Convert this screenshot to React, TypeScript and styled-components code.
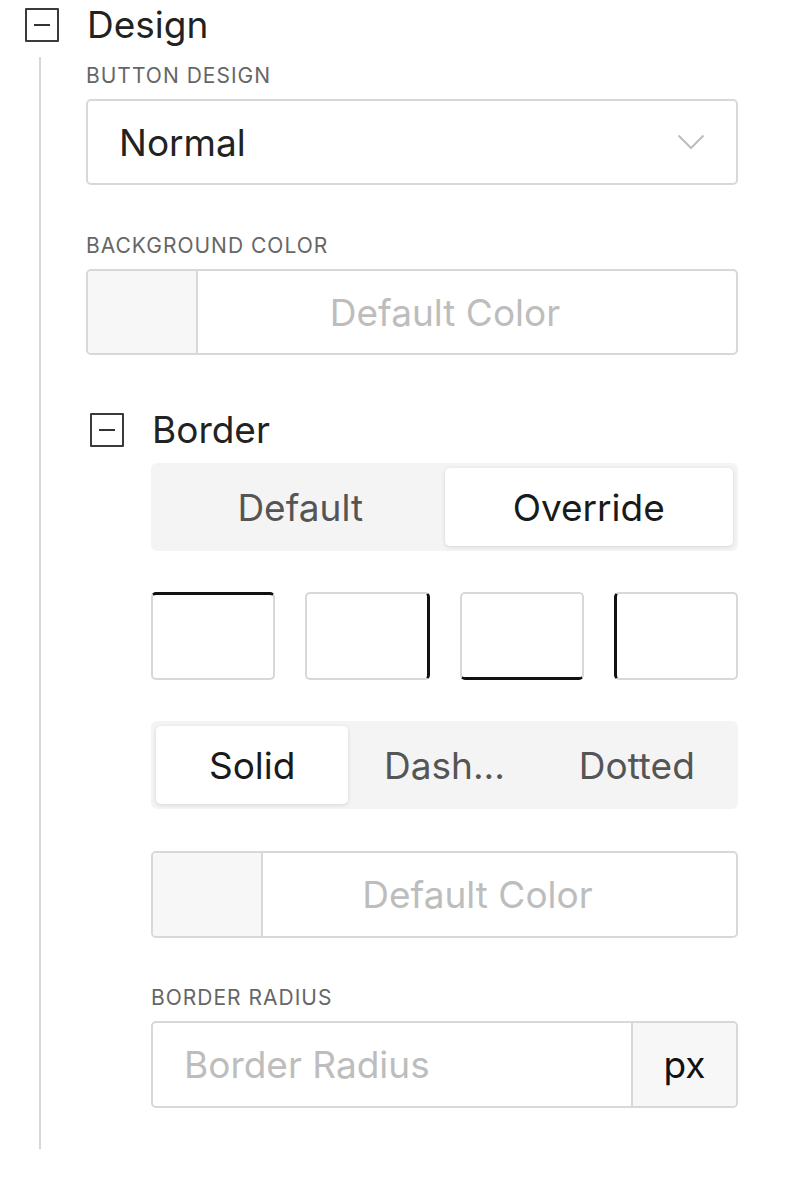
import { createGlobalStyle, styled } from "styled-components";

const GlobalStyle = createGlobalStyle`
  body {
    margin: 0;
    background: #fff;
    font-family: Inter, "Noto Sans", "Liberation Sans", sans-serif;
    color: #222;
  }
`;

const Page = styled.div`
  padding: 8px 0 0 25px;
  width: 713px;
`;

const SectionHeader = styled.div<{ $indent?: number; $top?: number }>`
  display: flex;
  align-items: center;
  height: 34px;
  gap: 28px;
  margin-top: ${(p) => p.$top ?? 0}px;
  padding-left: ${(p) => p.$indent ?? 0}px;
`;

const ToggleBox = styled.span`
  position: relative;
  box-sizing: border-box;
  width: 34px;
  height: 34px;
  border: 2.5px solid #3a3a3a;
  border-radius: 1px;
  flex-shrink: 0;

  &::after {
    content: "";
    position: absolute;
    left: 7px;
    right: 7px;
    top: 50%;
    height: 2px;
    margin-top: -1px;
    background: #333;
  }
`;

const SectionTitle = styled.span`
  font-size: 37px;
  line-height: 34px;
  color: #222;
`;

const SectionBody = styled.div`
  margin: 15px 0 0 14px;
  padding: 7px 0 41px 45px;
  border-left: 2px solid #d6d6d6;
`;

const Label = styled.div<{ $top?: number }>`
  margin-top: ${(p) => p.$top ?? 0}px;
  margin-bottom: 11px;
  font-size: 21px;
  line-height: 24px;
  letter-spacing: 1px;
  color: #666;
`;

const Field = styled.div<{ $top?: number; $h?: number }>`
  box-sizing: border-box;
  margin-top: ${(p) => p.$top ?? 0}px;
  height: ${(p) => p.$h ?? 86}px;
  border: 2px solid #d8d8d8;
  border-radius: 5px;
  background: #fff;
  display: flex;
  align-items: stretch;
  overflow: hidden;
`;

const SelectValue = styled.span`
  flex: 1;
  display: flex;
  align-items: center;
  padding-left: 31px;
  font-size: 37px;
  color: #222;
`;

const Chevron = styled.span`
  display: flex;
  align-items: center;
  padding-right: 31px;
`;

const Swatch = styled.span`
  width: 108px;
  background: #f7f7f7;
  border-right: 2px solid #d8d8d8;
`;

const Placeholder = styled.span<{ $align?: "left" | "center" }>`
  flex: 1;
  display: flex;
  align-items: center;
  justify-content: ${(p) => (p.$align === "left" ? "flex-start" : "center")};
  padding: ${(p) => (p.$align === "left" ? "0 0 0 31px" : "0 44px 0 0")};
  font-size: 37px;
  color: #bdbdbd;
`;

const Addon = styled.span`
  width: 103px;
  display: flex;
  align-items: center;
  justify-content: center;
  background: #f7f7f7;
  border-left: 2px solid #d8d8d8;
  font-size: 37px;
  color: #111;
`;

const SubBody = styled.div`
  margin-left: 65px;
`;

const Segmented = styled.div<{ $cols: number; $top?: number }>`
  box-sizing: border-box;
  margin-top: ${(p) => p.$top ?? 0}px;
  height: 88px;
  padding: 5px;
  border-radius: 6px;
  background: #f4f4f4;
  display: grid;
  grid-template-columns: repeat(${(p) => p.$cols}, 1fr);
`;

const Segment = styled.span<{ $active?: boolean }>`
  display: flex;
  align-items: center;
  justify-content: center;
  border-radius: 5px;
  font-size: 37px;
  color: ${(p) => (p.$active ? "#1a1a1a" : "#555")};
  background: ${(p) => (p.$active ? "#fff" : "transparent")};
  box-shadow: ${(p) => (p.$active ? "0 1px 4px rgba(0, 0, 0, 0.13)" : "none")};
`;

const SideGrid = styled.div`
  margin-top: 41px;
  display: grid;
  grid-template-columns: repeat(4, 1fr);
  gap: 30px;
`;

type Side = "top" | "right" | "bottom" | "left";

const SideBox = styled.span<{ $side: Side }>`
  box-sizing: border-box;
  height: 88px;
  border: 2px solid #d8d8d8;
  border-radius: 5px;
  border-${(p) => p.$side}: 3px solid #111;
`;

const sides: Side[] = ["top", "right", "bottom", "left"];

const App = () => (
  <>
    <GlobalStyle />
    <Page>
      <SectionHeader>
        <ToggleBox />
        <SectionTitle>Design</SectionTitle>
      </SectionHeader>

      <SectionBody>
        <Label>BUTTON DESIGN</Label>
        <Field>
          <SelectValue>Normal</SelectValue>
          <Chevron>
            <svg width="28" height="16" viewBox="0 0 28 16" fill="none">
              <path d="M1.5 1.5 L14 14 L26.5 1.5" stroke="#bdbdbd" strokeWidth="2" />
            </svg>
          </Chevron>
        </Field>

        <Label $top={49}>BACKGROUND COLOR</Label>
        <Field>
          <Swatch />
          <Placeholder>Default Color</Placeholder>
        </Field>

        <SectionHeader $indent={4} $top={58}>
          <ToggleBox />
          <SectionTitle>Border</SectionTitle>
        </SectionHeader>

        <SubBody>
          <Segmented $cols={2} $top={16}>
            <Segment>Default</Segment>
            <Segment $active>Override</Segment>
          </Segmented>

          <SideGrid>
            {sides.map((s) => (
              <SideBox key={s} $side={s} />
            ))}
          </SideGrid>

          <Segmented $cols={3} $top={41}>
            <Segment $active>Solid</Segment>
            <Segment>Dash...</Segment>
            <Segment>Dotted</Segment>
          </Segmented>

          <Field $top={42} $h={87}>
            <Swatch />
            <Placeholder>Default Color</Placeholder>
          </Field>

          <Label $top={48}>BORDER RADIUS</Label>
          <Field $h={87}>
            <Placeholder $align="left">Border Radius</Placeholder>
            <Addon>px</Addon>
          </Field>
        </SubBody>
      </SectionBody>
    </Page>
  </>
);

export default App;
